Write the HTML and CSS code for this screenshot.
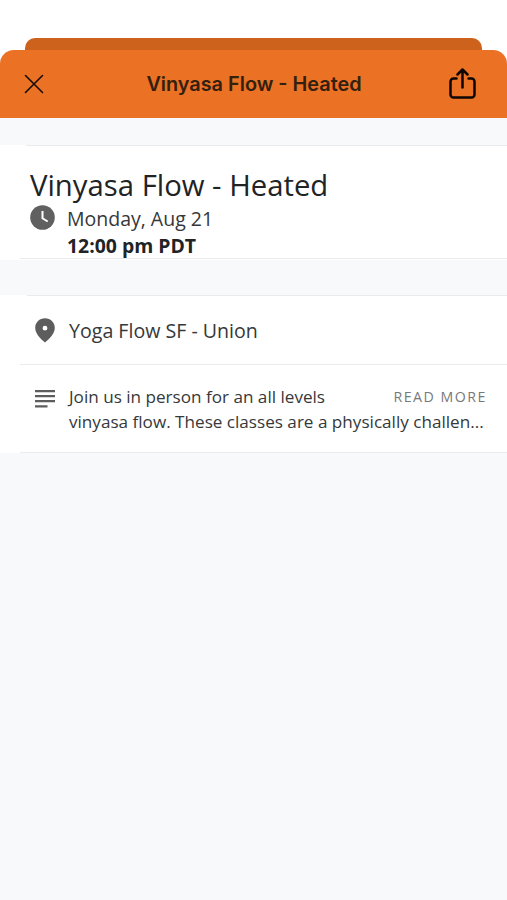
FILE: index.html
```
<!DOCTYPE html>
<html lang="en">
<head>
<meta charset="utf-8">
<title>Vinyasa Flow - Heated</title>
<link rel="stylesheet" href="styles.css">
</head>
<body>
<div class="back-sheet"></div>
<main class="sheet">
  <header class="bar">
    <svg class="close" width="20" height="20" viewBox="0 0 20 20"><path d="M1.500 1.500l17 17M18.500 1.500l-17 17"/></svg>
    <h1 class="bar-title">Vinyasa Flow - Heated</h1>
    <svg class="share" width="27" height="32" viewBox="0 0 27 32"><path d="M7.500 10.500H4.500a3 3 0 0 0-3 3v13a3 3 0 0 0 3 3h18a3 3 0 0 0 3-3v-13a3 3 0 0 0-3-3H19.500M13.500 19.500V2M8.500 6.500L13.500 1.500 18.500 6.500"/></svg>
  </header>
  <section class="summary">
    <h2 class="name">Vinyasa Flow - Heated</h2>
    <div class="when">
      <svg class="clock" width="25" height="25" viewBox="0 0 25 25"><circle cx="12.500" cy="12.500" r="12.300"/><path d="M12.500 6v7.300l5.200 3.200"/></svg>
      <div class="when-text">
        <div class="date">Monday, Aug 21</div>
        <strong class="time">12:00 pm PDT</strong>
      </div>
    </div>
  </section>
  <section class="details">
    <div class="row place">
      <svg class="pin" width="20" height="25" viewBox="0 0 20 25"><path fill-rule="evenodd" d="M10 0.300C4.500 0.300 0.200 4.500 0.200 9.800c0 6 5.300 11.200 9.800 14.700 4.500-3.500 9.800-8.700 9.800-14.700C19.800 4.500 15.500 0.300 10 0.300zm0 7.500a2.400 2.400 0 1 1 0 4.800 2.400 2.400 0 0 1 0-4.800z"/></svg>
      <span>Yoga Flow SF - Union</span>
    </div>
    <div class="row about">
      <svg class="lines" width="20" height="18" viewBox="0 0 20 18"><path d="M0 1.200h20M0 6.200h20M0 11.200h20M0 16.300h12.500"/></svg>
      <div class="copy">
        <div class="copy-line"><span>Join us in person for an all levels</span><span class="more">READ MORE</span></div>
        <div class="copy-line">vinyasa flow. These classes are a physically challen...</div>
      </div>
    </div>
  </section>
</main>
</body>
</html>
```
FILE: styles.css
```
* { box-sizing: border-box; }
body {
  margin: 0;
  min-height: 900px;
  padding-top: 38px;
  display: flex;
  flex-direction: column;
  background: #fff;
  font-family: "Open Sans", sans-serif;
  color: #212325;
  white-space: nowrap;
}
h1, h2 { margin: 0; font-weight: 400; }
svg { display: block; flex: none; }
.back-sheet {
  height: 12px;
  margin: 0 25px;
  border-radius: 10px 10px 0 0;
  background: #cc621b;
}
.sheet { flex: 1; background: #f8f9fb; border-radius: 14px 14px 0 0; }
.bar {
  height: 68px;
  padding: 0 31px 0 24px;
  display: grid;
  grid-template-columns: 36px 1fr 28px;
  align-items: center;
  background: #eb7125;
  border-radius: 14px 14px 0 0;
}
.close, .share { fill: none; stroke: #160b04; stroke-linecap: round; stroke-linejoin: round; }
.close { stroke-width: 1.6; }
.share { stroke-width: 2.5; stroke: #0d0602; justify-self: end; }
.bar-title { font: 600 19.850px/28px Inter, sans-serif; text-align: center; color: #34200f; }
.summary {
  height: 115px;
  margin-top: 27px;
  padding: 21px 0 0 30px;
  background: linear-gradient(#e9ebed, #e9ebed) 26px 0 / 100% 1px no-repeat, linear-gradient(#e9ebed, #e9ebed) 20px calc(100% - 1px) / 100% 1px no-repeat, #fff;
}
.name { font-size: 29.300px; line-height: 38px; }
.when { display: flex; gap: 12px; }
.clock { margin-top: 1px; fill: #606060; }
.clock path { fill: none; stroke: #fff; stroke-width: 2; }
.when-text { font-size: 19.500px; line-height: 27px; padding-top: 1px; }
.date { color: #36383a; }
.time { font-size: 19.400px; }
.details { margin-top: 35px; background: #fff; color: #36383a; }
.row { display: flex; padding-left: 35px; gap: 14px; }
.place {
  height: 69px;
  padding-top: 2px;
  align-items: center;
  font-size: 19.600px;
  background: linear-gradient(#e9ebed, #e9ebed) 27px 0 / 100% 1px no-repeat;
}
.about {
  height: 89px;
  padding-top: 20px;
  background: linear-gradient(#e9ebed, #e9ebed) 20px 0 / 100% 1px no-repeat, linear-gradient(#e9ebed, #e9ebed) 20px 100% / 100% 1px no-repeat;
}
.pin { fill: #5d5d5d; }
.lines { margin-top: 6px; stroke: #5d5d5d; stroke-width: 2.3; }
.copy { flex: 1; padding-right: 20px; font-size: 17.120px; line-height: 25px; }
.copy-line { display: flex; justify-content: space-between; }
.more { font-size: 14.200px; letter-spacing: 1.500px; color: #77797b; }
```
